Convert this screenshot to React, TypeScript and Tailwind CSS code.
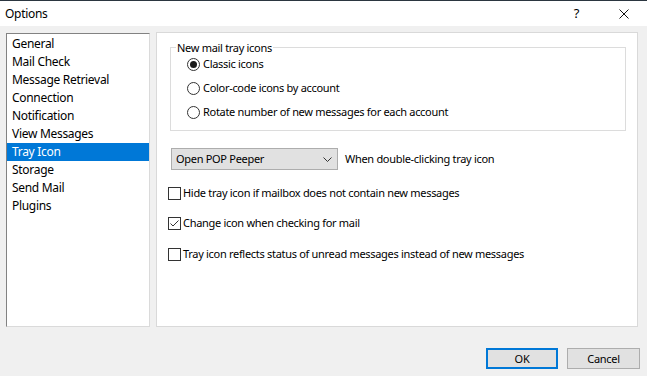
import React from "react";

const pages = [
  "General",
  "Mail Check",
  "Message Retrieval",
  "Connection",
  "Notification",
  "View Messages",
  "Tray Icon",
  "Storage",
  "Send Mail",
  "Plugins",
];

const radios = [
  { label: "Classic icons", checked: true },
  { label: "Color-code icons by account", checked: false },
  { label: "Rotate number of new messages for each account", checked: false },
];

function Radio({ checked }: { checked: boolean }) {
  return (
    <span className="w-[13px] h-[13px] rounded-full border border-[#333333] bg-white flex items-center justify-center shrink-0">
      {checked && <span className="w-[7px] h-[7px] rounded-full bg-[#1a1a1a]" />}
    </span>
  );
}

function Checkbox({ checked, label }: { checked: boolean; label: string }) {
  return (
    <div className="flex items-center h-[13px]">
      <span className="w-[13px] h-[13px] border border-[#333333] bg-white flex items-center justify-center shrink-0">
        {checked && (
          <svg width="11" height="11" viewBox="0 0 11 11">
            <path d="M1.5 5.5 L4 8 L9.5 2.5" fill="none" stroke="#333" strokeWidth="1" />
          </svg>
        )}
      </span>
      <span className="ml-[2px]">{label}</span>
    </div>
  );
}

export default function App() {
  return (
    <div
      className="w-[647px] h-[376px] bg-[#f0f0f0] flex flex-col text-[11px] tracking-[-0.3px] text-black overflow-hidden"
      style={{ fontFamily: '"Noto Sans", "Open Sans", sans-serif' }}
    >
      {/* title bar */}
      <div className="h-[26px] bg-white border-t border-[#2b3640] flex items-center shrink-0">
        <span className="ml-[5px] text-[12px]">Options</span>
        <span className="ml-auto mr-[40px] text-[13px]">?</span>
        <svg width="10" height="10" viewBox="0 0 10 10" className="mr-[18px]">
          <path d="M0.5 0.5 L9.5 9.5 M9.5 0.5 L0.5 9.5" stroke="#111" strokeWidth="1" />
        </svg>
      </div>

      <div className="flex pl-[6px] pt-[6px] gap-[6px]">
        {/* page list */}
        <div className="w-[144px] h-[294px] mt-[1px] bg-white border border-t-[#828282] border-l-[#828282] border-r-[#dadada] border-b-[#dadada] py-[1px]">
          {pages.map((p) => (
            <div
              key={p}
              className={`h-[18px] leading-[18px] pl-[5px] text-[12px] ${
                p === "Tray Icon" ? "bg-[#0078d7] text-white" : ""
              }`}
            >
              {p}
            </div>
          ))}
        </div>

        {/* settings panel */}
        <div className="w-[482px] h-[295px] bg-white border border-[#d9d9d9] pl-[13px] pt-[7px]">
          <fieldset className="w-[456px] h-[91px] border border-[#dcdcdc]">
            <legend className="ml-[5px] px-[1px] leading-[15px]">New mail tray icons</legend>
            <div className="flex flex-col gap-[11px] pt-[3px] pl-[16px]">
              {radios.map((r) => (
                <div key={r.label} className="flex items-center h-[13px]">
                  <Radio checked={r.checked} />
                  <span className="ml-[3px]">{r.label}</span>
                </div>
              ))}
            </div>
          </fieldset>

          <div className="flex items-center mt-[17px] ml-[1px]">
            <div className="w-[167px] h-[22px] bg-[#e1e1e1] border border-[#adadad] flex items-center pl-[4px] pr-[5px]">
              <span>Open POP Peeper</span>
              <svg width="9" height="5" viewBox="0 0 9 5" className="ml-auto">
                <path d="M0.5 0.5 L4.5 4.5 L8.5 0.5" fill="none" stroke="#333" strokeWidth="1" />
              </svg>
            </div>
            <span className="ml-[7px]">When double-clicking tray icon</span>
          </div>

          <div className="flex flex-col gap-[17px] mt-[17px] -ml-[2px]">
            <Checkbox checked={false} label="Hide tray icon if mailbox does not contain new messages" />
            <Checkbox checked={true} label="Change icon when checking for mail" />
            <div className="mt-[1px]">
              <Checkbox checked={false} label="Tray icon reflects status of unread messages instead of new messages" />
            </div>
          </div>
        </div>
      </div>

      {/* buttons */}
      <div className="flex justify-end gap-[9px] pr-[7px] mt-[21px]">
        <button className="w-[72px] h-[21px] bg-[#e1e1e1] border-2 border-[#0078d7] leading-none">OK</button>
        <button className="w-[73px] h-[21px] bg-[#e1e1e1] border border-[#adadad] leading-none">Cancel</button>
      </div>
    </div>
  );
}
